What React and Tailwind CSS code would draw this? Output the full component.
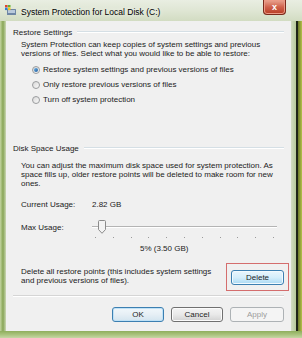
import React from 'react';

function Win7Button({ children, variant = 'normal', className = '' }) {
  const styles = {
    normal:
      'border-[#707070] bg-linear-to-b from-[#f4f4f4] via-[#e9e9e9] to-[#d2d2d2] text-[#1e1e1e] shadow-[inset_0_0_0_1px_#fbfbfb]',
    default:
      'border-[#3c7fb1] bg-linear-to-b from-[#f1f7fb] via-[#e6eff5] to-[#d3e4ef] text-[#1e1e1e] shadow-[inset_0_0_0_1px_#bfe1f6]',
    hot:
      'border-[#3c7fb1] bg-linear-to-b from-[#eaf6fd] via-[#d5eefb] to-[#a9d9f3] text-[#1e1e1e] shadow-[inset_0_0_0_1px_#f2fafe]',
    disabled: 'border-[#adb2b5] bg-[#f4f4f4] text-[#9c9c9c]',
  };
  return (
    <div
      className={`flex h-[15px] items-center justify-center rounded-[3px] border ${styles[variant]} ${className}`}
    >
      {children}
    </div>
  );
}

function Radio({ checked, label }) {
  return (
    <div className="flex h-[15px] items-center pl-[19px]">
      <div className="flex h-[8px] w-[8px] items-center justify-center rounded-full border border-[#9a9c9e] bg-linear-to-br from-[#d8d8d8] to-[#fafafa]">
        {checked && (
          <div className="h-[4px] w-[4px] rounded-full bg-linear-to-br from-[#6fb3e8] to-[#1b5a9c]" />
        )}
      </div>
      <span className="ml-[3px] whitespace-nowrap">{label}</span>
    </div>
  );
}

function GroupHeader({ children }) {
  return (
    <div className="flex h-[10px] items-center">
      <span className="whitespace-nowrap">{children}</span>
      <div className="ml-[5px] flex-1 border-t border-b border-t-[#d5dfe5] border-b-white" />
    </div>
  );
}

function AppIcon() {
  return (
    <svg width="12" height="12" viewBox="0 0 12 12">
      <rect x="3" y="5" width="9" height="6" rx="0.5" fill="#6f86a5" />
      <rect x="4" y="6" width="7" height="3" fill="#b9c9dc" />
      <rect x="1" y="1" width="2.6" height="2.4" fill="#e0442c" />
      <rect x="3.9" y="1" width="2.6" height="2.4" fill="#62b331" />
      <rect x="1" y="3.7" width="2.6" height="2.4" fill="#2f7fd6" />
      <rect x="3.9" y="3.7" width="2.6" height="2.4" fill="#f5c21a" />
    </svg>
  );
}

function SliderThumb() {
  return (
    <svg width="8" height="14" viewBox="0 0 8 14">
      <path
        d="M1.5 0.5 H6.5 Q7.5 0.5 7.5 1.5 V9.5 L4 13.3 L0.5 9.5 V1.5 Q0.5 0.5 1.5 0.5 Z"
        fill="#f3f3f3"
        stroke="#8b8b8b"
      />
    </svg>
  );
}

export default function App() {
  const ticks = Array.from({ length: 11 });
  return (
    <div className="flex h-[338px] w-[302px] flex-col overflow-hidden bg-[#b9cc96] font-['Liberation_Sans',Arial,sans-serif] text-[8px] leading-[9px] text-[#1b1b1b]">
      {/* title bar */}
      <div className="flex h-[21px] items-start bg-linear-to-b from-[#e9eee2] via-[#dfe6d4] to-[#d2dcc2]">
        <div className="mt-[4px] ml-[4px]">
          <AppIcon />
        </div>
        <span className="mt-[7px] ml-[5px] text-[8.5px] leading-[10px] whitespace-nowrap text-black [text-shadow:0_0_5px_#ffffff]">
          System Protection for Local Disk (C:)
        </span>
        <div className="flex-1" />
        <div className="mr-[16px] flex h-[15px] w-[23px] items-center justify-center rounded-b-[4px] border border-t-0 border-[#7a2a1c] bg-linear-to-b from-[#e9a592] via-[#d0624c] to-[#b73a22] shadow-[inset_0_0_0_1px_#eb9a86]">
          <span className="text-[9px] leading-[9px] font-bold text-white">x</span>
        </div>
      </div>

      <div className="flex flex-1">
        {/* left frame */}
        <div className="w-[6px] bg-linear-to-r from-[#c5d6a2] via-[#88a556] to-[#cbd8b4]" />

        {/* client area */}
        <div className="flex w-[285px] flex-col bg-[#f0f0f0] px-[7px]">
          <div className="mt-[6px]">
            <GroupHeader>Restore Settings</GroupHeader>
          </div>
          <p className="mt-[3px] pl-[8px] whitespace-nowrap">
            System Protection can keep copies of system settings and previous
            <br />
            versions of files. Select what you would like to be able to restore:
          </p>
          <div className="mt-[4px] flex flex-col">
            <Radio checked label="Restore system settings and previous versions of files" />
            <Radio label="Only restore previous versions of files" />
            <Radio label="Turn off system protection" />
          </div>

          <div className="mt-[36px]">
            <GroupHeader>Disk Space Usage</GroupHeader>
          </div>
          <p className="mt-[8px] pl-[8px] whitespace-nowrap">
            You can adjust the maximum disk space used for system protection. As
            <br />
            space fills up, older restore points will be deleted to make room for new
            <br />
            ones.
          </p>

          <div className="mt-[11px] flex h-[10px] items-center pl-[8px]">
            <span className="w-[71px] whitespace-nowrap">Current Usage:</span>
            <span>2.82 GB</span>
          </div>

          <div className="mt-[11px] flex h-[14px] items-center pl-[8px]">
            <span className="w-[71px] whitespace-nowrap">Max Usage:</span>
            <div className="relative h-[14px] w-[185px]">
              <div className="absolute top-[6px] right-0 left-0 border-t border-b border-t-[#b4b4b4] border-b-white" />
              <div className="absolute top-0 left-[6px]">
                <SliderThumb />
              </div>
            </div>
          </div>
          <div className="mt-[3px] flex h-[1px] w-[179px] justify-between self-start ml-[82px]">
            {ticks.map((_, i) => (
              <div key={i} className="h-[1px] w-[1px] bg-[#9a9a9a]" />
            ))}
          </div>

          <div className="mt-[6px] ml-[127px] h-[10px] whitespace-nowrap">5% (3.50 GB)</div>

          <div className="mt-[13px] flex items-start">
            <p className="flex-1 pl-[8px] whitespace-nowrap">
              Delete all restore points (this includes system settings
              <br />
              and previous versions of files).
            </p>
            <div className="relative mt-[3px]">
              <div className="absolute -top-[7px] -right-[5px] -bottom-[6px] -left-[5px] border border-[#d46d6d]" />
              <Win7Button variant="hot" className="w-[53px]">
                Delete
              </Win7Button>
            </div>
          </div>

          <div className="mt-[10px] border-t border-b border-t-[#d5d5d5] border-b-white" />

          <div className="mt-[10px] flex justify-end gap-[7px]">
            <Win7Button variant="default" className="w-[52px]">
              OK
            </Win7Button>
            <Win7Button className="w-[52px]">Cancel</Win7Button>
            <Win7Button variant="disabled" className="w-[54px]">
              Apply
            </Win7Button>
          </div>
        </div>

        {/* right frame */}
        <div className="flex flex-1">
          <div className="w-[5px] bg-linear-to-r from-[#d3dcc4] to-[#b7c99a]" />
          <div className="w-[2px] bg-[#1f2418]" />
          <div className="flex-1 bg-linear-to-r from-[#6d7a2c] to-[#b5c24a]" />
        </div>
      </div>

      {/* bottom frame */}
      <div className="h-[7px] bg-linear-to-b from-[#8fae5c] via-[#a9c27c] to-[#c6d6a4]" />
    </div>
  );
}
